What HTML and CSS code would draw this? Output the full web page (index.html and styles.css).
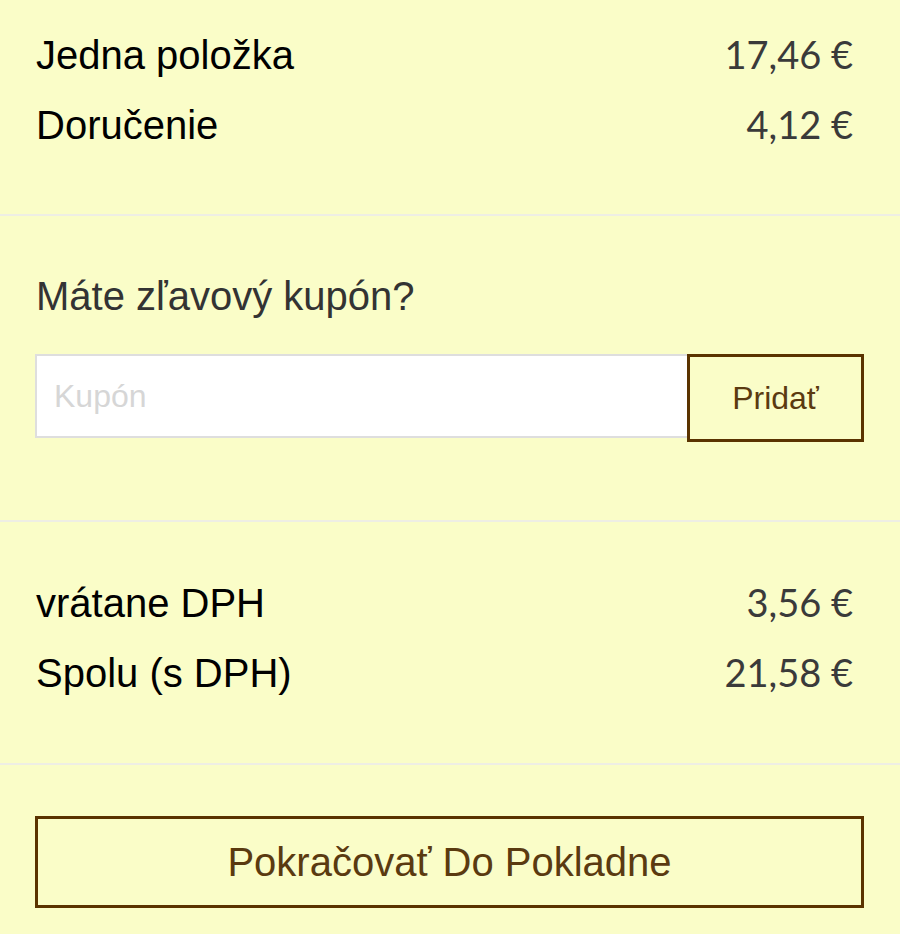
FILE: index.html
```html
<!DOCTYPE html>
<html lang="sk">
<head>
<meta charset="utf-8">
<title>Súhrn košíka</title>
<link rel="stylesheet" href="styles.css">
</head>
<body>
<div class="summary">
  <section class="block block-totals">
    <div class="row"><span class="label">Jedna položka</span><span class="price">17,46&nbsp;€</span></div>
    <div class="row"><span class="label">Doručenie</span><span class="price">4,12&nbsp;€</span></div>
  </section>
  <section class="block block-coupon">
    <h2 class="coupon-title">Máte zľavový kupón?</h2>
    <form class="coupon-form">
      <input class="coupon-input" type="text" placeholder="Kupón">
      <button class="coupon-btn" type="button">Pridať</button>
    </form>
  </section>
  <section class="block block-tax">
    <div class="row"><span class="label">vrátane DPH</span><span class="price">3,56&nbsp;€</span></div>
    <div class="row"><span class="label">Spolu (s DPH)</span><span class="price">21,58&nbsp;€</span></div>
  </section>
  <section class="block block-checkout">
    <button class="checkout-btn" type="button">Pokračovať Do Pokladne</button>
  </section>
</div>
</body>
</html>
```

FILE: styles.css
```css
html, body {
  margin: 0;
  padding: 0;
  background: #fafdc8;
}
body {
  font-family: "Liberation Sans", Arial, sans-serif;
  color: #000;
  width: 900px;
  height: 934px;
  overflow: hidden;
}
.summary {
  padding: 0 36px 0 35px;
}
.block {
  border-bottom: 2px solid #eeeee4;
  margin: 0 -36px 0 -35px;
  padding-left: 35px;
  padding-right: 36px;
}
.block:last-child {
  border-bottom: none;
}
.block-totals {
  padding-top: 19px;
  padding-bottom: 55px;
}
.block-tax {
  padding-top: 45px;
  padding-bottom: 56px;
}
.row {
  display: flex;
  justify-content: space-between;
  align-items: baseline;
  height: 70px;
  line-height: 70px;
  font-size: 40px;
  padding-left: 1px;
  padding-right: 11px;
}
.price {
  font-family: Lato, "Liberation Sans", sans-serif;
  font-size: 38px;
  color: #3a3a3a;
}
.block-coupon {
  padding-top: 57px;
  padding-bottom: 78px;
}
.coupon-title {
  margin: 0 0 35px 1px;
  font-size: 40px;
  font-weight: normal;
  line-height: 46px;
  color: #333;
}
.coupon-form {
  display: flex;
  align-items: flex-start;
  margin: 0;
}
.coupon-input {
  flex: 1;
  box-sizing: border-box;
  height: 84px;
  margin: 0;
  border: 2px solid #dedede;
  border-right: none;
  background: #fff;
  padding: 0 17px;
  font-family: "Liberation Sans", Arial, sans-serif;
  font-size: 32px;
  color: #333;
  outline: none;
}
.coupon-input::placeholder {
  color: #d6d6d6;
}
.coupon-btn {
  box-sizing: border-box;
  width: 177px;
  height: 88px;
  margin: 0;
  border: 3px solid #5a3300;
  background: #fafdc8;
  font-family: "Liberation Sans", Arial, sans-serif;
  font-size: 32px;
  color: #5a3a10;
  padding: 0;
}
.block-checkout {
  padding-top: 51px;
}
.checkout-btn {
  display: block;
  box-sizing: border-box;
  width: 100%;
  height: 92px;
  margin: 0;
  border: 3px solid #5a3300;
  background: #fafdc8;
  font-family: "Liberation Sans", Arial, sans-serif;
  font-size: 40px;
  color: #5a3a10;
  padding: 0;
}
```
